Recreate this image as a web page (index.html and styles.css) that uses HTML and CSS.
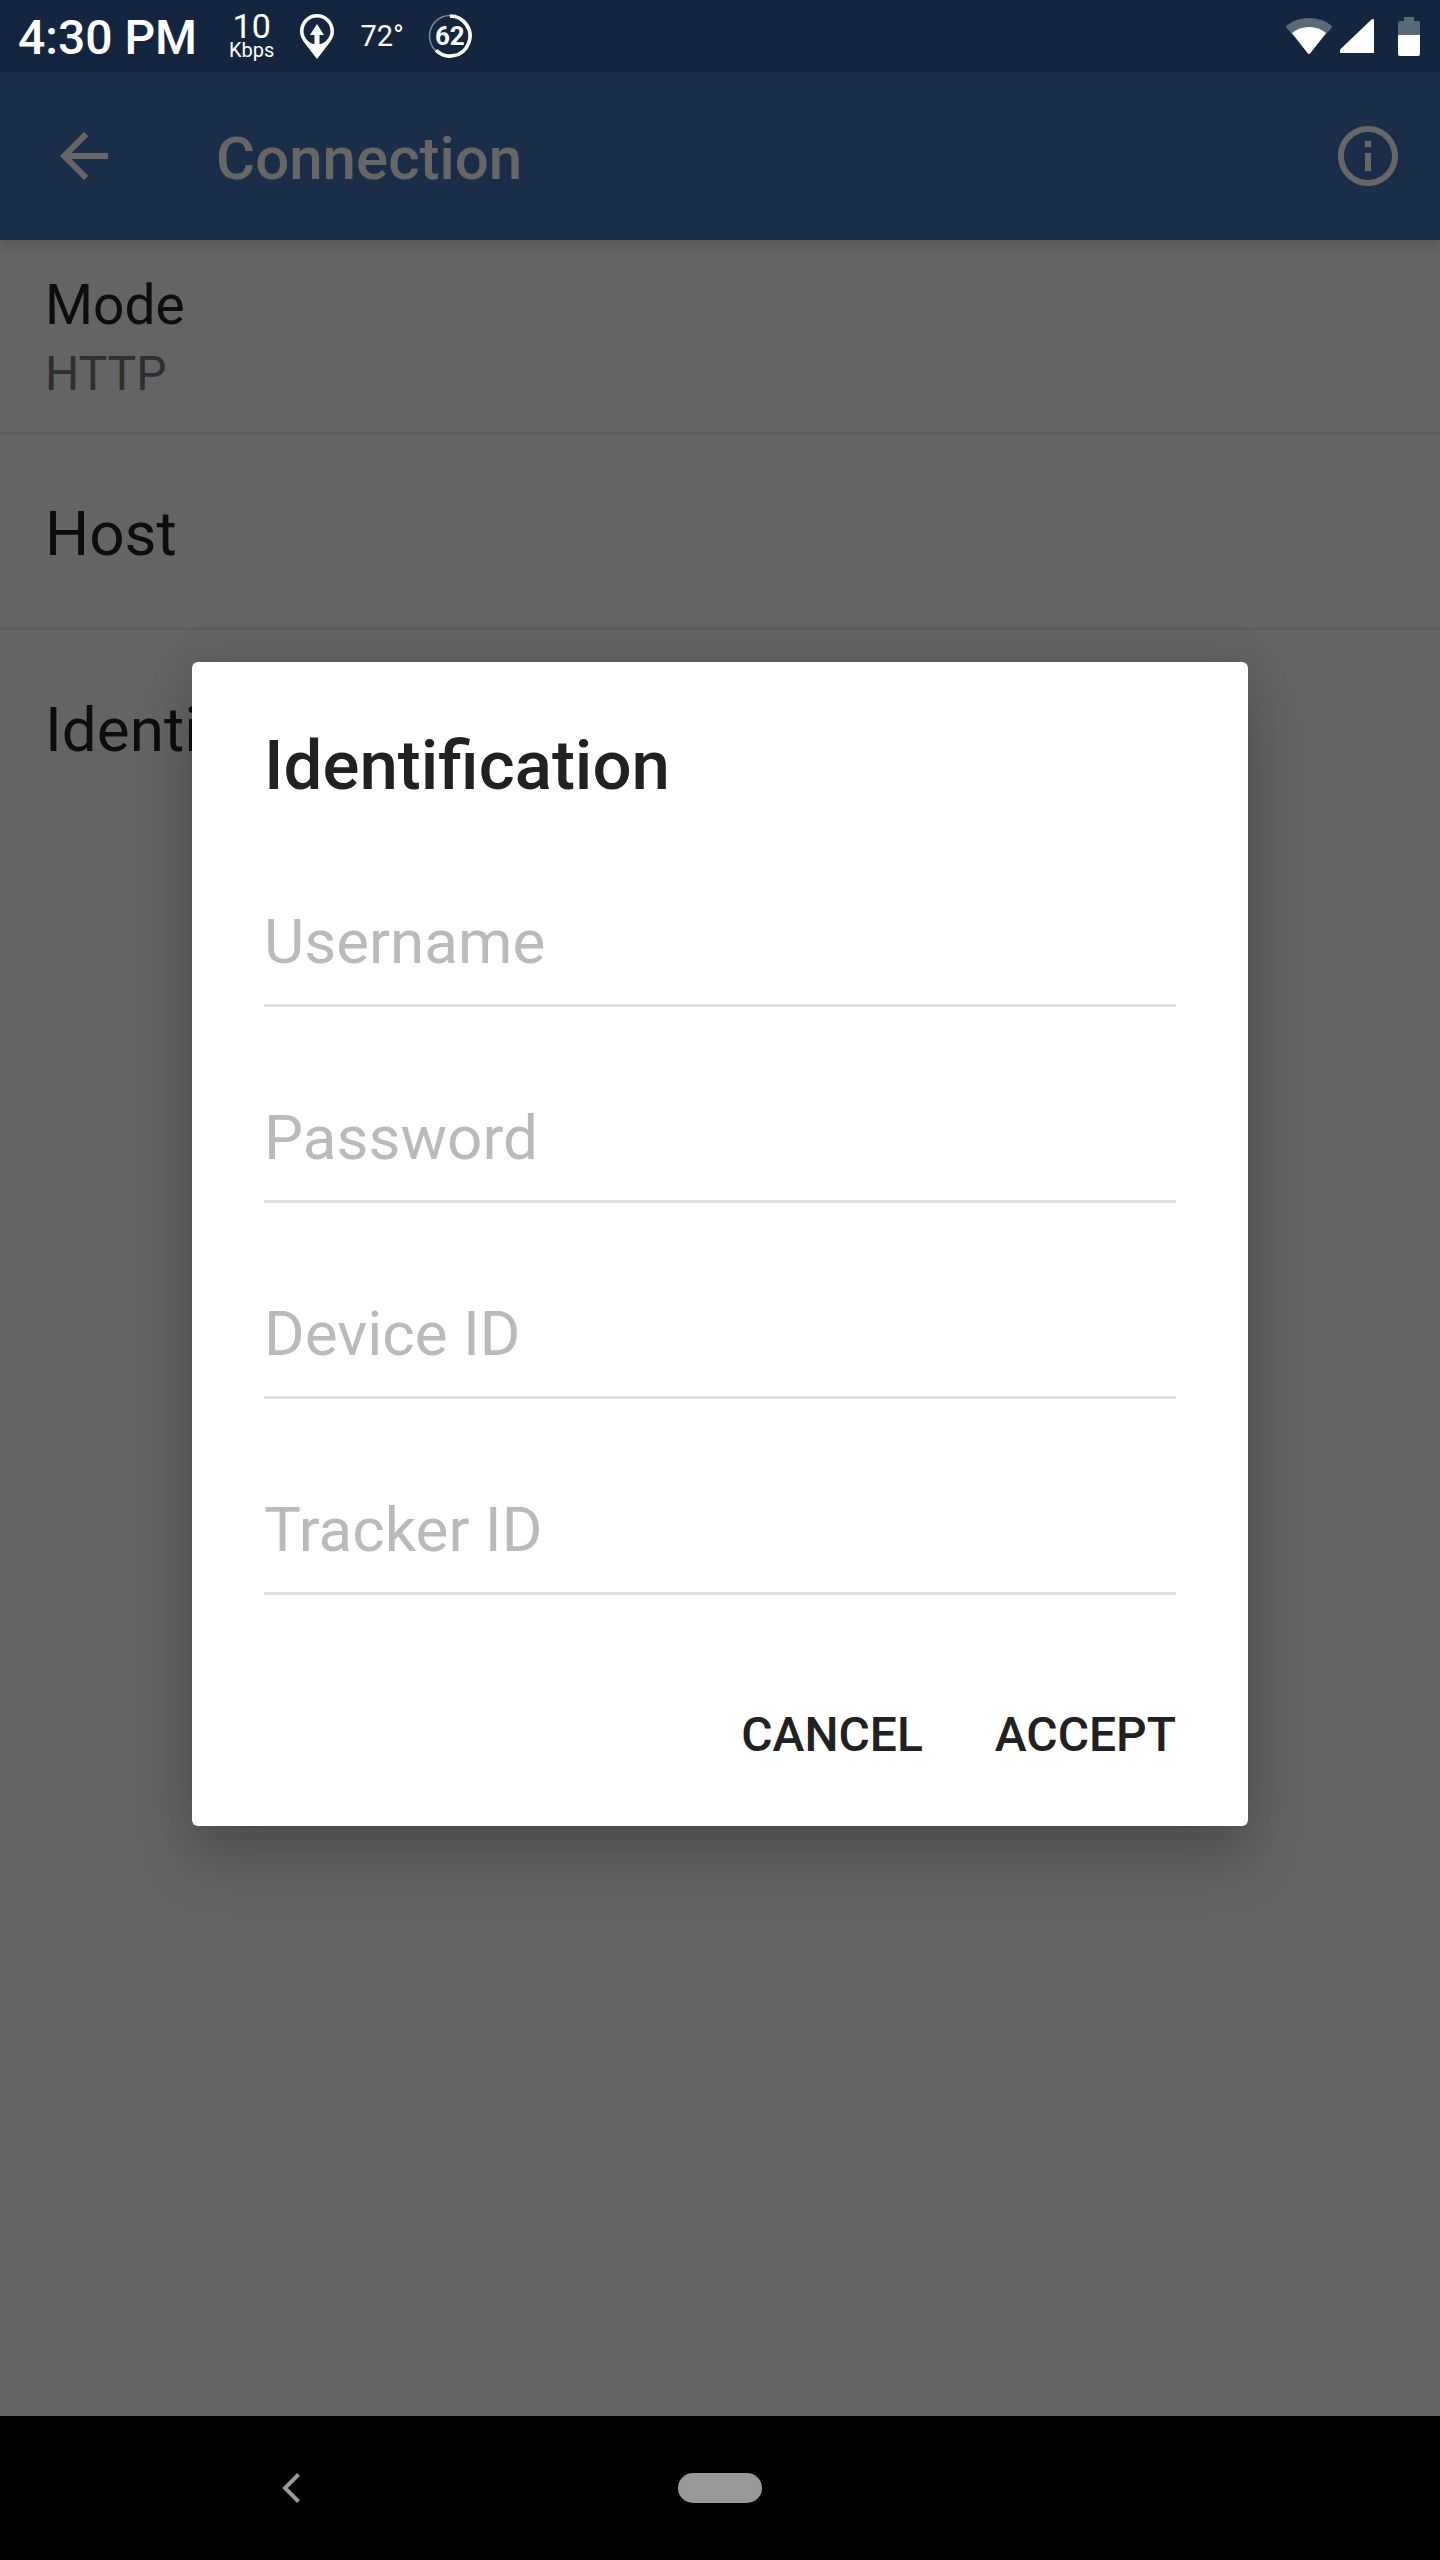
FILE: index.html
```html
<!DOCTYPE html>
<html lang="en">
<head>
  <meta charset="UTF-8">
  <meta name="viewport" content="width=device-width, initial-scale=1.0">
  <title>Connection</title>
  <link rel="stylesheet" href="styles.css">
</head>
<body>
  <div class="status-bar">
    <span class="clock">4:30 PM</span>
    <div class="speed">
      <span class="speed-value">10</span>
      <span class="speed-unit">Kbps</span>
    </div>
    <svg class="pin" viewBox="0 0 34 45" aria-hidden="true">
      <path fill="#fff" fill-rule="evenodd" d="M17 0C7.600 0 0 7.600 0 17c0 4 1.300 7.300 3.500 10.500L17 45l13.500-17.500C32.700 24.300 34 21 34 17 34 7.600 26.400 0 17 0zm0 3.600A13.400 13.400 0 0 1 17 30.400 13.400 13.400 0 0 1 17 3.600z"/>
      <path fill="#fff" d="M17 10l7 11h-4.500V31h-5V21H10z"/>
    </svg>
    <span class="temp">72°</span>
    <div class="battery-level">
      <svg viewBox="0 0 44 44" aria-hidden="true">
        <circle cx="22" cy="22" r="20.500" fill="none" stroke="#7f8a99" stroke-width="1.500"/>
        <path d="M22 2A20 20 0 1 1 8 36.300" fill="none" stroke="#fff" stroke-width="3.600"/>
      </svg>
      <span>62</span>
    </div>

    <div class="system-icons">
      <svg class="wifi" viewBox="0 0 46 36" aria-hidden="true">
        <path fill="#5b687a" d="M23 0C14 0 6.500 3 1 7.300c-1 .8-1.200 1.600-.4 2.700L23 36 45.400 10c.8-1.100.6-1.900-.4-2.700C39.500 3 32 0 23 0z"/>
        <path fill="#fff" d="M23 9c-6.500 0-12.500 2-17 6l15.500 20c1 1.200 2 1.200 3 0L40 15c-4.500-4-10.500-6-17-6z"/>
      </svg>
      <svg class="signal" viewBox="0 0 34 34" aria-hidden="true">
        <path fill="#fff" d="M31.500.6Q32.200 0 33 0q1 0 1 1v33H1q-1 0-1-1v-1.500q0-.8.600-1.400z"/>
      </svg>
      <svg class="battery" viewBox="0 0 22 39" aria-hidden="true">
        <path fill="#5b687a" d="M6 0h10v4h4q2 0 2 2v12H0V6q0-2 2-2h4z"/>
        <path fill="#fff" d="M0 18h22v19q0 2-2 2H2q-2 0-2-2z"/>
      </svg>
    </div>
  </div>

  <div class="screen">
    <header class="app-bar">
      <button class="icon-button" type="button" aria-label="Back">
        <svg viewBox="0 0 24 24"><path d="M20 11H7.830l5.590-5.590L12 4l-8 8 8 8 1.410-1.410L7.830 13H20v-2z"/></svg>
      </button>
      <h1>Connection</h1>
      <button class="icon-button" type="button" aria-label="Info">
        <svg viewBox="0 0 24 24"><path d="M11 7h2v2h-2zm0 4h2v6h-2zm1-9C6.480 2 2 6.480 2 12s4.480 10 10 10 10-4.480 10-10S17.520 2 12 2zm0 18c-4.410 0-8-3.590-8-8s3.590-8 8-8 8 3.590 8 8-3.590 8-8 8z"/></svg>
      </button>
    </header>

    <ul class="settings">
      <li class="two-line">
        <span class="name">Mode</span>
        <span class="value">HTTP</span>
      </li>
      <li>Host</li>
      <li>Identification</li>
    </ul>

    <div class="scrim">
      <form class="dialog" role="dialog" aria-labelledby="dialog-title">
        <h2 id="dialog-title">Identification</h2>
        <input type="text" placeholder="Username" aria-label="Username">
        <input type="password" placeholder="Password" aria-label="Password">
        <input type="text" placeholder="Device ID" aria-label="Device ID">
        <input type="text" placeholder="Tracker ID" aria-label="Tracker ID">
        <div class="actions">
          <button type="button">CANCEL</button>
          <button type="button">ACCEPT</button>
        </div>
      </form>
    </div>
  </div>

  <nav class="nav-bar">
    <button class="nav-back" type="button" aria-label="Back">
      <svg viewBox="0 0 18 30"><path d="M16.500 1.500L3 15l13.500 13.500" fill="none" stroke="#999" stroke-width="4"/></svg>
    </button>
    <button class="nav-home" type="button" aria-label="Home"></button>
    <span></span>
  </nav>
</body>
</html>
```
FILE: styles.css
```css
* {
  box-sizing: border-box;
}
body {
  margin: 0;
  min-height: 100vh;
  display: flex;
  flex-direction: column;
  font-family: Roboto, sans-serif;
  background-color: #000;
}
h1, h2, ul {
  margin: 0;
  padding: 0;
}
button {
  border: none;
  padding: 0;
  background: none;
  font-family: inherit;
  cursor: pointer;
}
svg {
  display: block;
}

/* status bar */
.status-bar {
  height: 72px;
  padding: 0 20px 0 18px;
  display: flex;
  align-items: center;
  color: #fff;
  background-color: #14263f;
}
.clock {
  padding-top: 3px;
  font-size: 48px;
  font-weight: 500;
  margin-right: 32px;
}
.speed {
  display: flex;
  flex-direction: column;
  align-items: center;
  margin-right: 26px;
}
.speed-value {
  font-size: 34px;
  line-height: 28px;
}
.speed-unit {
  font-size: 20px;
  line-height: 20px;
}
.pin {
  width: 34px;
  height: 45px;
  margin-right: 26px;
}
.temp {
  font-size: 29px;
  margin-right: 24px;
}
.battery-level {
  display: grid;
  place-items: center;
  font-size: 26px;
  font-weight: 700;
}
.battery-level > * {
  grid-area: 1 / 1;
}
.battery-level svg {
  width: 44px;
  height: 44px;
}
.system-icons {
  display: flex;
  align-items: center;
  margin-left: auto;
}
.wifi {
  width: 46px;
  height: 36px;
  margin-right: 8px;
}
.signal {
  width: 34px;
  height: 34px;
  margin-right: 24px;
}
.battery {
  width: 22px;
  height: 39px;
}

/* settings screen, dimmed by the scrim */
.screen {
  flex: 1;
  position: relative;
  background-color: #fafafa;
}
.app-bar {
  position: relative;
  height: 168px;
  padding: 0 36px 0 48px;
  display: flex;
  align-items: center;
  background-color: #4373b6;
  box-shadow: 0 6px 12px rgba(0, 0, 0, 0.14);
}
.app-bar h1 {
  flex: 1;
  margin-left: 96px;
  padding-top: 4px;
  font-size: 60px;
  font-weight: 500;
  color: #fff;
}
.icon-button svg {
  width: 72px;
  height: 72px;
  fill: #fff;
}
.settings {
  list-style: none;
}
.settings li {
  height: 195px;
  padding: 4px 45px 0;
  display: flex;
  align-items: center;
  font-size: 62px;
  color: #212121;
  border-bottom: 3px solid #e8e8e8;
}
.settings li:last-child {
  border-bottom: none;
}
.settings .two-line {
  flex-direction: column;
  align-items: flex-start;
  justify-content: center;
}
.name {
  font-size: 55px;
  line-height: 72px;
}
.value {
  font-size: 48px;
  line-height: 66px;
  color: #757575;
}

/* dialog */
.scrim {
  position: absolute;
  inset: 0;
  padding: 0 192px;
  display: flex;
  align-items: center;
  background-color: rgba(0, 0, 0, 0.6);
}
.dialog {
  flex: 1;
  min-width: 0;
  padding: 62px 72px 28px;
  display: flex;
  flex-direction: column;
  background-color: #fff;
  border-radius: 6px;
  box-shadow: 0 36px 60px rgba(0, 0, 0, 0.2), 0 0 48px rgba(0, 0, 0, 0.1);
}
.dialog h2 {
  font-size: 69px;
  line-height: 84px;
  font-weight: 500;
  color: #212121;
  margin-bottom: 58px;
}
.dialog input {
  width: 100%;
  height: 141px;
  margin-bottom: 55px;
  padding: 12px 0 0;
  border: none;
  border-bottom: 3px solid #e0e0e0;
  border-radius: 0;
  background: none;
  outline: none;
  font-family: inherit;
  font-size: 62px;
  color: #212121;
}
.dialog input::placeholder {
  color: #bababa;
  opacity: 1;
}
.actions {
  display: flex;
  justify-content: flex-end;
  gap: 72px;
  padding-top: 20px;
}
.actions button {
  height: 128px;
  font-size: 48px;
  font-weight: 500;
  color: #212121;
}

/* navigation bar */
.nav-bar {
  height: 144px;
  display: grid;
  grid-template-columns: 582px 1fr 582px;
  align-items: center;
  justify-items: center;
}
.nav-back svg {
  width: 18px;
  height: 30px;
}
.nav-home {
  width: 84px;
  height: 30px;
  border-radius: 15px;
  background-color: #999;
}
```
